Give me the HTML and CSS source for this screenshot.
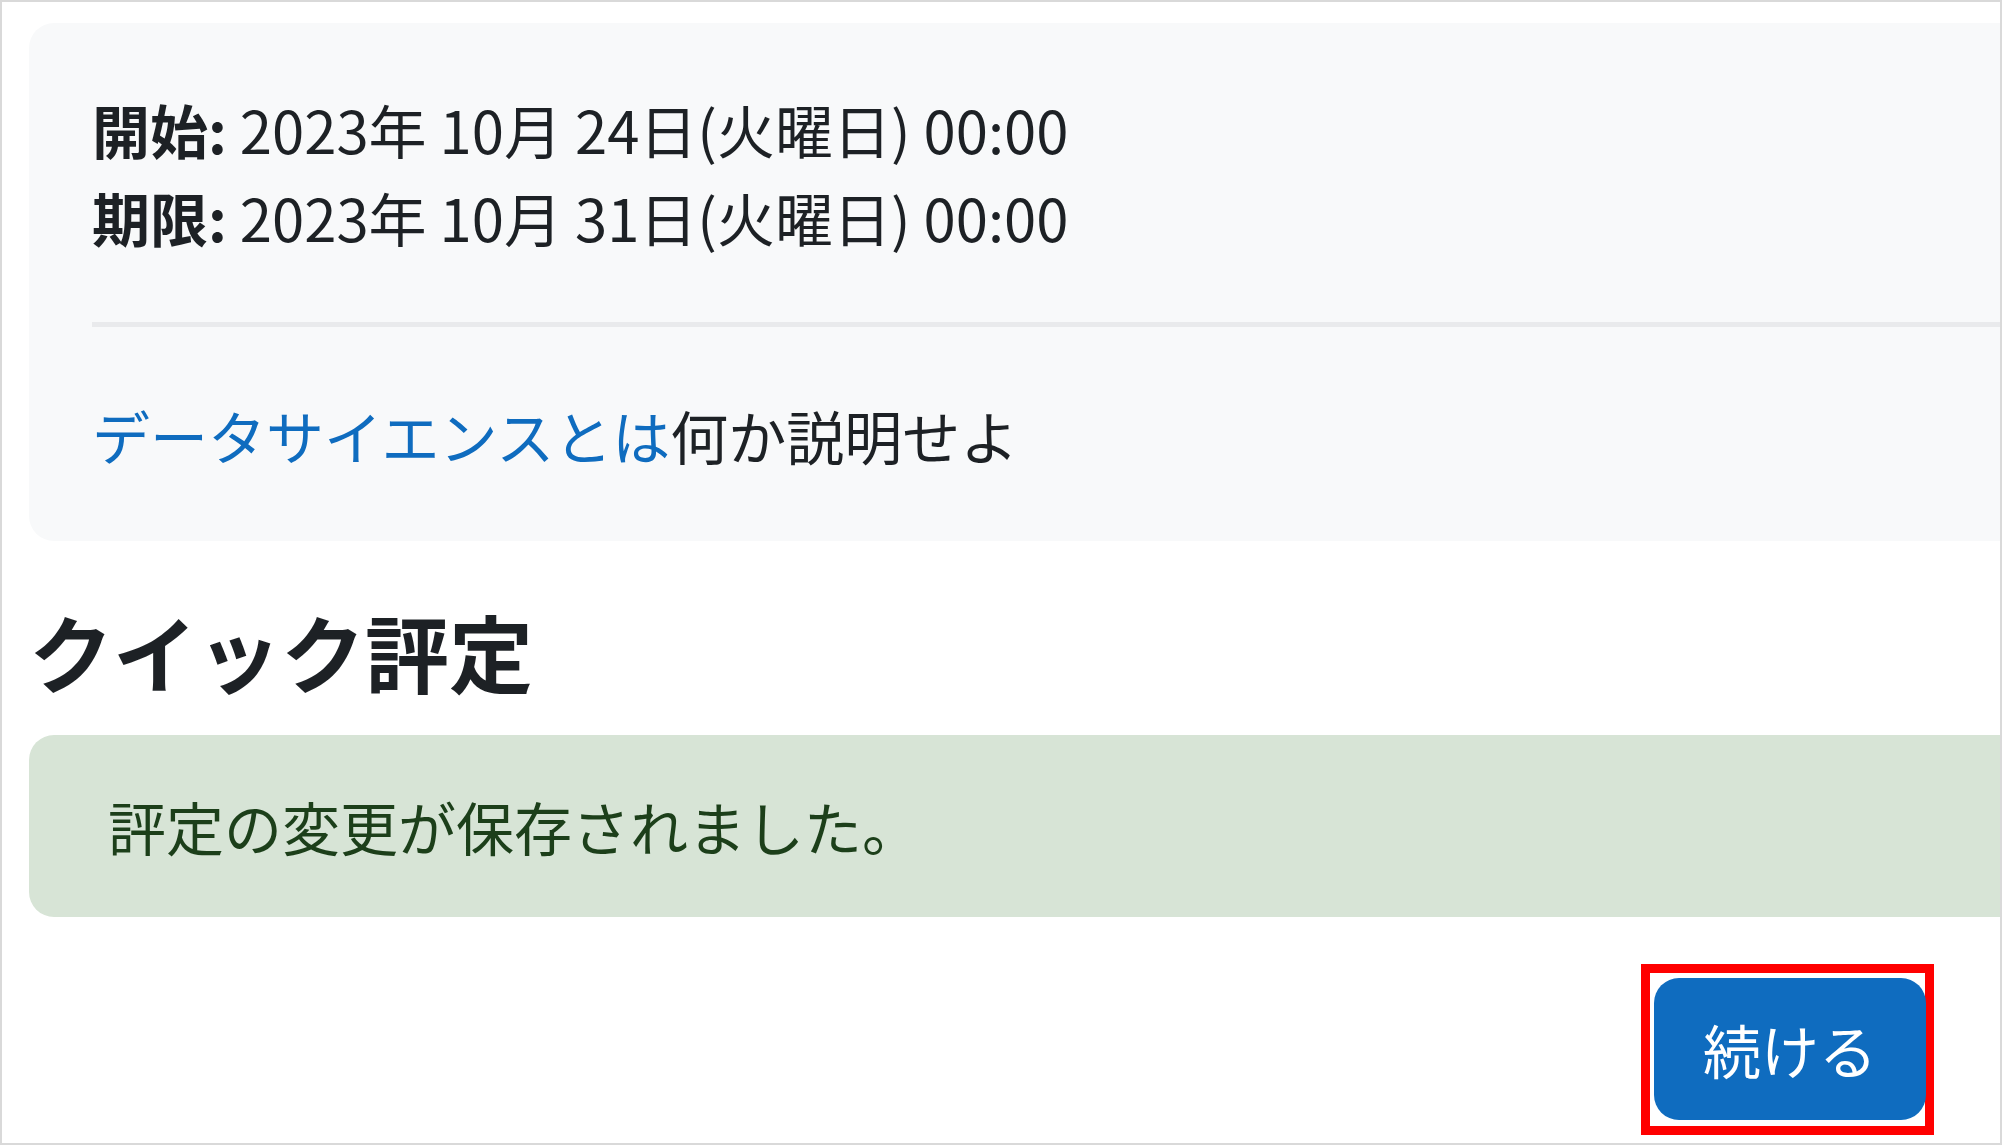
FILE: index.html
```html
<!DOCTYPE html>
<html lang="ja">
<head>
<meta charset="utf-8">
<title>クイック評定</title>
<link rel="stylesheet" href="styles.css">
</head>
<body>
<div class="frame">
  <div class="content">
    <div class="card">
      <div class="dates">
        <div class="date-line"><strong>開始:</strong> 2023年 10月 24日(火曜日) 00:00</div>
        <div class="date-line"><strong>期限:</strong> 2023年 10月 31日(火曜日) 00:00</div>
      </div>
      <hr class="divider">
      <div class="description"><a class="link" href="#">データサイエンスとは</a>何か説明せよ</div>
    </div>
    <h3 class="heading">クイック評定</h3>
    <div class="alert">評定の変更が保存されました。</div>
    <div class="actions">
      <div class="highlight">
        <button class="btn">続ける</button>
      </div>
    </div>
  </div>
</div>
</body>
</html>
```

FILE: styles.css
```css
html, body {
  margin: 0;
  padding: 0;
  background: #ffffff;
}

body {
  font-family: "Noto Sans CJK JP", "Noto Sans", sans-serif;
  color: #1d2125;
}

.frame {
  width: 2002px;
  height: 1145px;
  box-sizing: border-box;
  border: 2px solid #d9d9d9;
  overflow: hidden;
}

.content {
  padding: 21px 0 0 27px;
}

.card {
  background: #f8f9fa;
  border-radius: 25px 0 0 25px;
  padding: 62px 0 62px 63px;
  margin-right: -30px;
  font-size: 58px;
  line-height: 88px;
}

.date-line strong {
  font-weight: 700;
}

.divider {
  border: 0;
  border-top: 5px solid #e9eaec;
  margin: 61px 0 64px;
  height: 0;
}

.link {
  color: #0f6cbf;
  text-decoration: none;
}

.heading {
  margin: 60px 0 33px;
  font-size: 84px;
  line-height: 1.2;
  font-weight: 700;
  color: #1d2125;
}

.alert {
  background: #d7e4d6;
  color: #1c3f1a;
  border-radius: 25px 0 0 25px;
  margin-right: -30px;
  padding: 47px 78px 47px 79px;
  font-size: 58px;
  line-height: 88px;
}

.actions {
  display: flex;
  justify-content: flex-end;
  margin-top: 47px;
  padding-right: 66px;
}

.highlight {
  border: 9px solid #ff0000;
  padding: 5px 0 6px 4px;
  background: #ffffff;
}

.btn {
  display: block;
  background: #0f6cbf;
  color: #ffffff;
  border: 0;
  border-radius: 25px;
  padding: 27px 49px;
  margin-right: -1px;
  font-family: "Noto Sans CJK JP", "Noto Sans", sans-serif;
  font-size: 58px;
  line-height: 88px;
}
```
